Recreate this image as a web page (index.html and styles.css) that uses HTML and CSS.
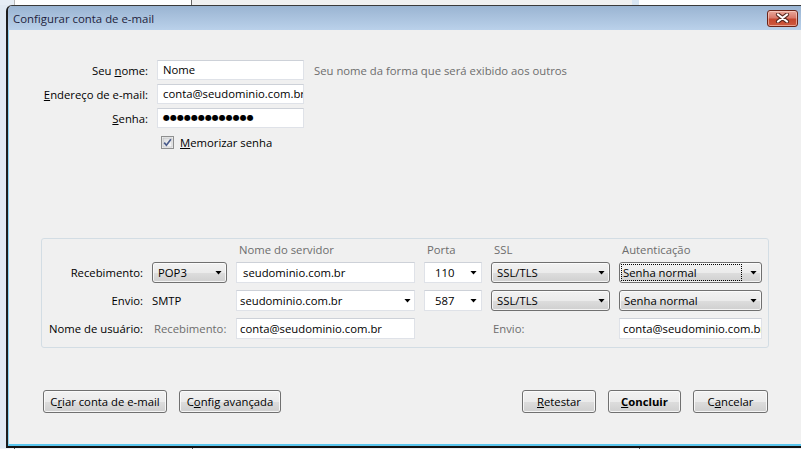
FILE: index.html
```html
<!DOCTYPE html>
<html lang="pt-BR">
<head>
<meta charset="utf-8">
<title>Configurar conta de e-mail</title>
<link rel="stylesheet" href="styles.css">
</head>
<body>
<div class="screen">
  <div class="bg-top">
    <div class="bg-a"></div>
    <div class="bg-b"></div>
    <div class="bg-c"></div>
    <div class="bg-d"></div>
    <div class="bg-e"></div>
  </div>
  <div class="middle">
    <div class="side"></div>
    <div class="dialog">
      <div class="titlebar">
        <span class="title">Configurar conta de e-mail</span>
        <div class="close">
          <svg width="15" height="10" viewBox="0 0 15 10">
            <path d="M3 1.5 L12 8.5 M12 1.5 L3 8.5" stroke="#5a2a22" stroke-width="4.2" stroke-linecap="round" fill="none"/>
            <path d="M3 1.5 L12 8.5 M12 1.5 L3 8.5" stroke="#ffffff" stroke-width="2.2" stroke-linecap="round" fill="none"/>
          </svg>
        </div>
      </div>
      <div class="body">
        <div class="identity">
          <div class="lbl">Seu <u>n</u>ome:</div>
          <div class="field">Nome</div>
          <div class="hint">Seu nome da forma que será exibido aos outros</div>

          <div class="lbl"><u>E</u>ndereço de e-mail:</div>
          <div class="field">conta@seudominio.com.br</div>
          <div></div>

          <div class="lbl"><u>S</u>enha:</div>
          <div class="field dots">●●●●●●●●●●●●●</div>
          <div></div>

          <div></div>
          <div class="check-row">
            <svg class="checkbox" width="13" height="13" viewBox="0 0 13 13">
              <defs>
                <linearGradient id="cbg" x1="0" y1="0" x2="1" y2="1">
                  <stop offset="0" stop-color="#d9dadb"/>
                  <stop offset="1" stop-color="#fbfbfb"/>
                </linearGradient>
              </defs>
              <rect x="0.5" y="0.5" width="12" height="12" fill="#f4f4f4" stroke="#8e8f8f"/>
              <rect x="2" y="2" width="9" height="9" fill="url(#cbg)" stroke="#b4b6b8" stroke-width="0.6"/>
              <path d="M3.2 6.6 L5.4 9.2 L9.9 3.2" stroke="#4b5c8c" stroke-width="1.7" fill="none"/>
            </svg>
            <span><u>M</u>emorizar senha</span>
          </div>
        </div>

        <div class="servers">
          <div></div>
          <div></div>
          <div class="hd">Nome do servidor</div>
          <div class="hd">Porta</div>
          <div class="hd">SSL</div>
          <div class="hd">Autenticação</div>

          <div class="rlbl">Recebimento:</div>
          <div class="sel"><span>POP3</span><i class="arrow"></i></div>
          <div class="field pad-first">seudominio.com.br</div>
          <div class="combo port"><span>110</span><i class="arrow"></i></div>
          <div class="sel"><span>SSL/TLS</span><i class="arrow"></i></div>
          <div class="sel sel-focus"><span class="focus-ring">Senha normal</span><i class="arrow"></i></div>

          <div class="rlbl">Envio:</div>
          <div class="plain">SMTP</div>
          <div class="combo"><span>seudominio.com.br</span><i class="arrow"></i></div>
          <div class="combo port"><span>587</span><i class="arrow"></i></div>
          <div class="sel"><span>SSL/TLS</span><i class="arrow"></i></div>
          <div class="sel sel-auth"><span>Senha normal</span><i class="arrow"></i></div>

          <div class="rlbl">Nome de usuário:</div>
          <div class="muted pad2">Recebimento:</div>
          <div class="field pad-small">conta@seudominio.com.br</div>
          <div></div>
          <div class="muted pad2">Envio:</div>
          <div class="field pad-small">conta@seudominio.com.br</div>
        </div>

        <div class="actions">
          <div class="group">
            <button class="btn w-criar">C<u>r</u>iar conta de e-mail</button>
            <button class="btn w-config">C<u>o</u>nfig avançada</button>
          </div>
          <div class="group">
            <button class="btn w-retestar"><u>R</u>etestar</button>
            <button class="btn w-concluir bold"><u>C</u>oncluir</button>
            <button class="btn w-cancelar">C<u>a</u>ncelar</button>
          </div>
        </div>
      </div>
    </div>
  </div>
  <div class="bg-bottom">
    <i class="tick t1"></i>
    <i class="tick t2"></i>
    <i class="tick t3"></i>
  </div>
</div>
</body>
</html>
```
FILE: styles.css
```css
* { box-sizing: border-box; }

html, body {
  margin: 0;
  padding: 0;
}

body {
  width: 801px;
  height: 449px;
  overflow: hidden;
  font-family: "Open Sans", "Noto Sans", sans-serif;
  font-size: 11.3px;
  color: #000;
  background: #e1e9f2;
}

.screen {
  width: 801px;
  height: 449px;
  display: flex;
  flex-direction: column;
}

/* background windows peeking out */
.bg-top {
  height: 5px;
  flex: none;
  display: flex;
}
.bg-a { width: 14px; background: #e6edf5; }
.bg-b { width: 178px; background: #fff; border-left: 1px solid #b8b8b8; border-right: 1px solid #666; }
.bg-c { width: 440px; background: #f0f0f0; }
.bg-d { width: 7px; background: #d9e6f3; }
.bg-e { flex: 1; background: #fff; }

.bg-bottom {
  height: 1px;
  flex: none;
  display: flex;
  background: #eef1f5;
}
.tick { display: block; width: 1px; height: 1px; background: #555; }
.t1 { margin-left: 14px; }
.t2 { margin-left: 177px; }
.t3 { margin-left: 446px; }

.middle {
  height: 443px;
  flex: none;
  display: flex;
}
.side {
  width: 6px;
  flex: none;
  background: #e1e9f2;
}

.dialog {
  flex: 1;
  display: flex;
  flex-direction: column;
  background: #f0f0f0;
  border-top: 1px solid #3a3a3a;
  border-left: 2px solid #1d1d1d;
  border-bottom: 2px solid #111;
  border-top-left-radius: 6px;
  overflow: hidden;
}

.titlebar {
  height: 24px;
  flex: none;
  display: flex;
  align-items: center;
  justify-content: space-between;
  padding: 0 3px 0 5px;
  background: linear-gradient(#9ab4d2, #bad1ea);
}
.title {
  color: #1e1e3c;
  font-size: 11.4px;
}
.close {
  width: 31px;
  height: 17px;
  border: 1px solid #6b2418;
  border-radius: 3px;
  background: linear-gradient(#e9a89b 0%, #d9796a 45%, #c5472f 55%, #cf5a3f 100%);
  box-shadow: inset 0 0 0 1px rgba(255, 220, 210, 0.55);
  display: flex;
  align-items: center;
  justify-content: center;
}

.body {
  flex: 1;
  display: flex;
  flex-direction: column;
  border-left: 1px solid #8fd3ef;
  border-bottom: 2px solid #5ac6ee;
}

/* identity form */
.identity {
  display: grid;
  grid-template-columns: 139px 147px auto;
  grid-template-rows: 20px 20px 20px 17px;
  column-gap: 9px;
  row-gap: 4px;
  margin-top: 30px;
  align-items: center;
}
.lbl {
  text-align: right;
  white-space: nowrap;
}
.field {
  height: 20px;
  background: #fff;
  border: 1px solid #dfe2e8;
  border-top-color: #cdd1d8;
  padding: 0 5px;
  line-height: 18px;
  white-space: nowrap;
  overflow: hidden;
}
.dots {
  font-family: "DejaVu Sans", sans-serif;
  font-size: 8px;
  letter-spacing: 0;
  line-height: 18px;
}
.hint {
  color: #6d6d6d;
  margin-left: 1px;
  white-space: nowrap;
}
.check-row {
  grid-column: 2 / 4;
  align-self: end;
  height: 13px;
  display: flex;
  align-items: center;
  gap: 6px;
  padding-left: 4px;
}
.checkbox { flex: none; }

/* server settings box */
.servers {
  margin: 89px 0 0 32px;
  width: 728px;
  height: 110px;
  border: 1px solid #d3dde4;
  border-radius: 3px;
  padding: 3px 0 0 0;
  display: grid;
  grid-template-columns: 101px 75px 179px 58px 119px 143px;
  grid-template-rows: 13px 21px 21px 21px;
  column-gap: 9px;
  row-gap: 7px;
  align-items: center;
}
.servers .field {
  height: 21px;
  line-height: 19px;
}
.hd {
  align-self: start;
  height: 13px;
  line-height: 15px;
  padding-left: 3px;
  color: #6d6d6d;
  white-space: nowrap;
}
.rlbl {
  text-align: right;
  white-space: nowrap;
}
.plain { padding-left: 0; }
.muted { color: #6d6d6d; white-space: nowrap; }
.pad2 { padding-left: 2px; }
.pad-first { padding-left: 6px; }
.pad-small { padding-left: 3px; }

.sel {
  height: 21px;
  border: 1px solid #707070;
  border-radius: 3px;
  background: linear-gradient(#f2f2f2 0%, #ebebeb 50%, #dddddd 51%, #cfcfcf 100%);
  box-shadow: inset 0 0 0 1px rgba(252, 252, 252, 0.8);
  display: flex;
  align-items: center;
  padding: 0 4px 0 5px;
  white-space: nowrap;
}
.sel-auth { padding-left: 4px; }
.sel-focus { padding-left: 1px; }
.focus-ring {
  height: 17px;
  width: 121px;
  border: 1px dotted #000;
  padding-left: 1px;
  line-height: 15px;
}

.combo {
  height: 21px;
  background: #fff;
  border: 1px solid #dfe2e8;
  border-top-color: #cdd1d8;
  display: flex;
  align-items: center;
  padding: 0 3px 0 3px;
  white-space: nowrap;
}
.port { padding-left: 10px; padding-right: 4px; }

.arrow {
  display: block;
  margin-left: auto;
  width: 7px;
  height: 4px;
  background: #000;
  clip-path: polygon(0 0, 100% 0, 50% 100%);
  flex: none;
}

/* bottom buttons */
.actions {
  margin-top: 42px;
  padding: 0 33px 0 34px;
  display: flex;
  justify-content: space-between;
}
.group {
  display: flex;
  gap: 12px;
}
.btn {
  height: 23px;
  padding: 0;
  border: 1px solid #707070;
  border-radius: 3px;
  background: linear-gradient(#f2f2f2 0%, #ebebeb 50%, #dddddd 51%, #cfcfcf 100%);
  box-shadow: inset 0 0 0 1px rgba(252, 252, 252, 0.85);
  font: inherit;
  color: #000;
  text-align: center;
  white-space: nowrap;
}
.bold { font-weight: 700; }
.w-criar { width: 124px; }
.w-config { width: 102px; }
.w-retestar { width: 74px; }
.w-concluir { width: 73px; }
.w-cancelar { width: 75px; }
```
